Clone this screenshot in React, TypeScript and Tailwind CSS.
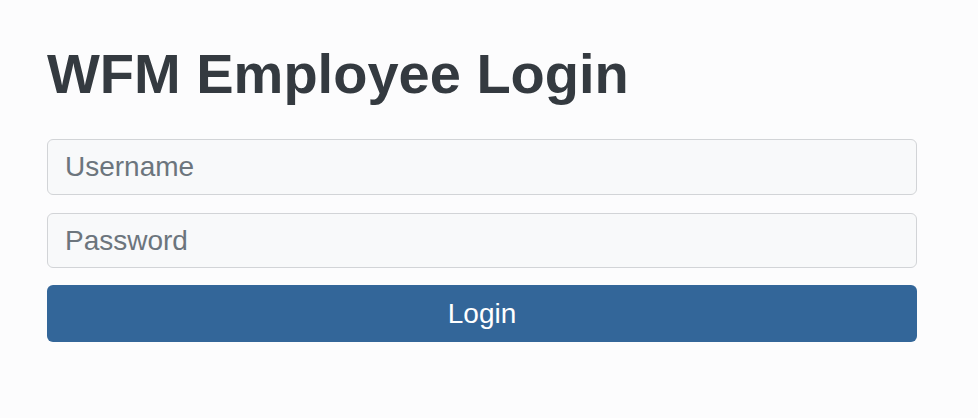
export default function App() {
  return (
    <div
      className="min-h-[418px] w-full bg-[#fcfcfd] pl-[47px] pt-[40px]"
      style={{ fontFamily: '"Liberation Sans", Arial, Helvetica, sans-serif' }}
    >
      <div className="w-[870px]">
        <h1 className="m-0 text-[56px] font-bold leading-[1.2] text-[#343a40]">
          WFM Employee Login
        </h1>
        <form className="mt-[32px] flex flex-col" onSubmit={(e) => e.preventDefault()}>
          <input
            type="text"
            placeholder="Username"
            className="h-[56px] w-full rounded-[6px] border border-[#d2d4d7] bg-[#f8f9fa] px-[17px] text-[28px] text-[#343a40] placeholder:text-[#6c757d] outline-none"
          />
          <input
            type="password"
            placeholder="Password"
            className="mt-[18px] h-[55px] w-full rounded-[6px] border border-[#d2d4d7] bg-[#f8f9fa] px-[17px] text-[28px] text-[#343a40] placeholder:text-[#6c757d] outline-none"
          />
          <button
            type="submit"
            className="mt-[17px] h-[57px] w-full rounded-[6px] bg-[#336699] text-[28px] text-white"
          >
            Login
          </button>
        </form>
      </div>
    </div>
  );
}
